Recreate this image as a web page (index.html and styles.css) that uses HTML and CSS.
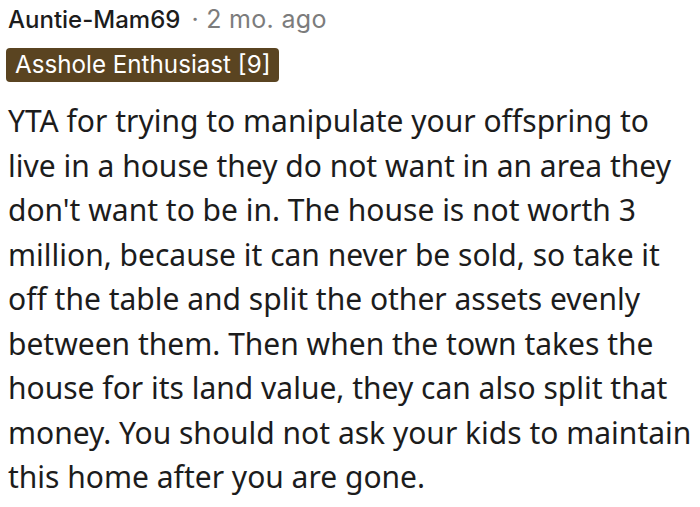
FILE: index.html
```html
<!DOCTYPE html>
<html>
<head>
<meta charset="utf-8">
<link rel="stylesheet" href="styles.css">
</head>
<body>
<div class="comment">
  <div class="meta">
    <span class="author">Auntie-Mam69</span>
    <span class="time">· 2 mo. ago</span>
  </div>
  <div class="flair">Asshole Enthusiast [9]</div>
  <p class="text">YTA for trying to manipulate your offspring to live in a house they do not want in an area they don't want to be in. The house is not worth 3 million, because it can never be sold, so take it off the table and split the other assets evenly between them. Then when the town takes the house for its land value, they can also split that money. You should not ask your kids to maintain this home after you are gone.</p>
</div>
</body>
</html>
```
FILE: styles.css
```css
html, body {
  margin: 0;
  padding: 0;
  background: #ffffff;
}
.comment {
  padding: 4px 0 0 8px;
  width: 692px;
}
.meta {
  display: flex;
  align-items: baseline;
  gap: 11px;
  font-family: "Inter", "Noto Sans", sans-serif;
  font-size: 24px;
  line-height: 30px;
}
.author {
  color: #1c1c1c;
  font-weight: 500;
}
.time {
  color: #7c7c7c;
  font-size: 25px;
  letter-spacing: 0.3px;
}
.flair {
  display: inline-block;
  margin-top: 13px;
  margin-left: -2px;
  background: #5a4421;
  color: #ffffff;
  font-family: "Inter", "Noto Sans", sans-serif;
  font-size: 24.2px;
  line-height: 34px;
  padding: 0 9px;
  border-radius: 4px;
}
.text {
  margin: 17px 0 0 0;
  font-family: "Noto Sans", sans-serif;
  font-size: 30px;
  line-height: 44.5px;
  color: #1c1c1c;
}
```
